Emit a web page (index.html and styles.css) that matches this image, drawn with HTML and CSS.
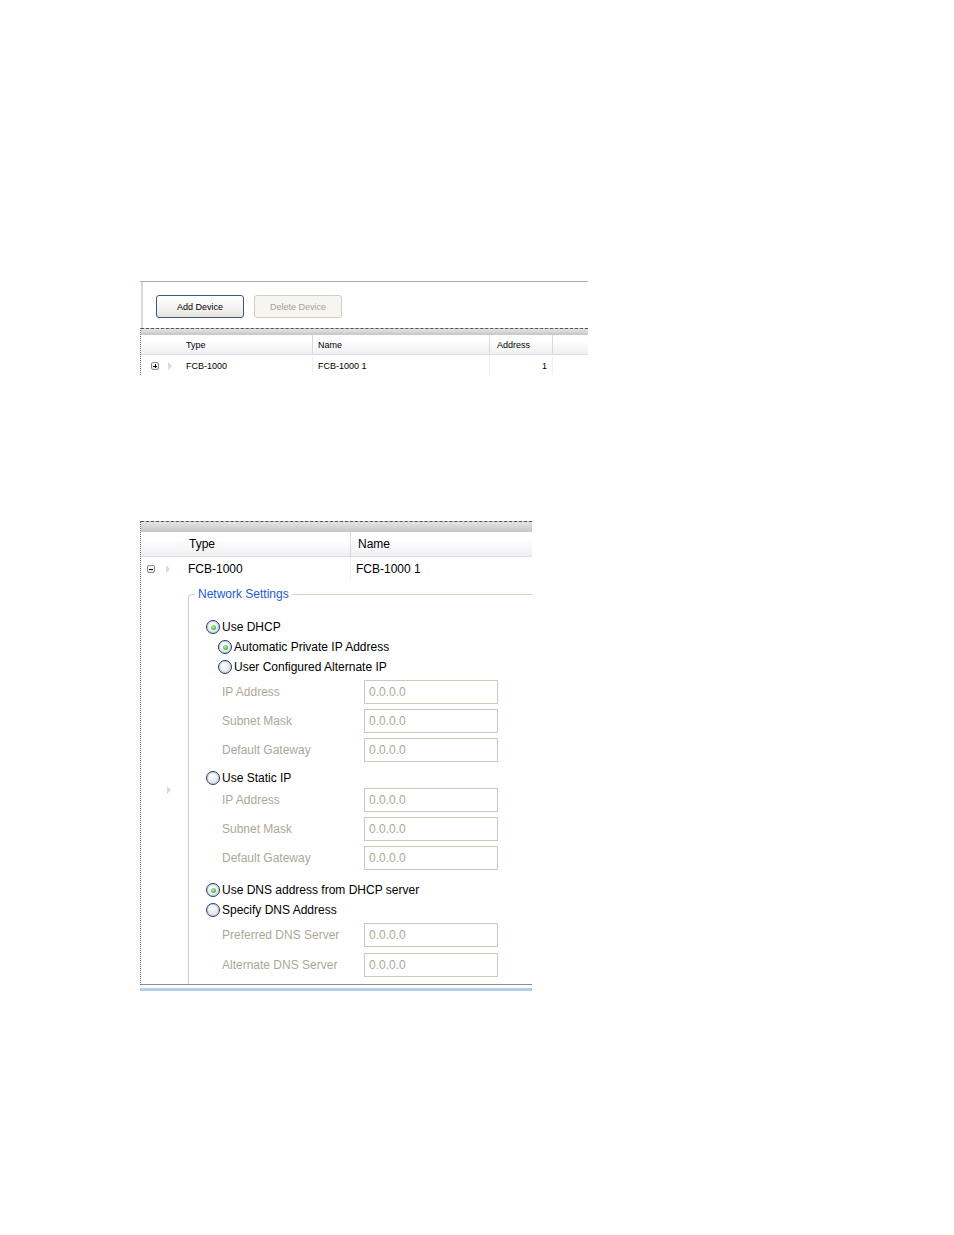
FILE: index.html
```html
<!DOCTYPE html>
<html>
<head lang="en">
    <meta charset="UTF-8">
    <title>Devices</title>
    <link rel="stylesheet" href="styles.css">
</head>
<body>
<div class="page">
    <div class="devices">
        <div class="toolbar">
            <button class="btn">Add Device</button>
            <button class="btn" disabled>Delete Device</button>
        </div>
        <div class="grid">
            <div class="band"></div>
            <div class="head">
                <div class="ind"></div>
                <div class="col c-type">Type</div>
                <div class="col c-name">Name</div>
                <div class="col c-addr">Address</div>
                <div class="col c-rest"></div>
            </div>
            <div class="row">
                <div class="ind"><span class="exp plus"></span><span class="tri"></span></div>
                <div class="col c-type">FCB-1000</div>
                <div class="col c-name">FCB-1000 1</div>
                <div class="col c-addr num">1</div>
                <div class="col c-rest"></div>
            </div>
        </div>
    </div>

    <div class="config">
        <div class="grid">
            <div class="band"></div>
            <div class="head">
                <div class="ind"></div>
                <div class="col c-type">Type</div>
                <div class="col c-name">Name</div>
            </div>
            <div class="row">
                <div class="ind"><span class="exp minus"></span><span class="tri"></span></div>
                <div class="col c-type">FCB-1000</div>
                <div class="col c-name">FCB-1000 1</div>
            </div>
            <div class="detail">
                <div class="ind"><span class="tri"></span></div>
                <fieldset class="group">
                    <legend>Network Settings</legend>

                    <div class="opt first"><span class="radio on"></span>Use DHCP</div>
                    <div class="opt sub"><span class="radio on"></span>Automatic Private IP Address</div>
                    <div class="opt sub"><span class="radio"></span>User Configured Alternate IP</div>
                    <div class="field f-first"><span class="lbl">IP Address</span><span class="box">0.0.0.0</span></div>
                    <div class="field"><span class="lbl">Subnet Mask</span><span class="box">0.0.0.0</span></div>
                    <div class="field"><span class="lbl">Default Gateway</span><span class="box">0.0.0.0</span></div>

                    <div class="opt o-static"><span class="radio"></span>Use Static IP</div>
                    <div class="field f-static"><span class="lbl">IP Address</span><span class="box">0.0.0.0</span></div>
                    <div class="field"><span class="lbl">Subnet Mask</span><span class="box">0.0.0.0</span></div>
                    <div class="field"><span class="lbl">Default Gateway</span><span class="box">0.0.0.0</span></div>

                    <div class="opt o-dns"><span class="radio on"></span>Use DNS address from DHCP server</div>
                    <div class="opt"><span class="radio"></span>Specify DNS Address</div>
                    <div class="field f-dns"><span class="lbl">Preferred DNS Server</span><span class="box">0.0.0.0</span></div>
                    <div class="field f-last"><span class="lbl">Alternate DNS Server</span><span class="box">0.0.0.0</span></div>
                </fieldset>
            </div>
        </div>
        <div class="foot"></div>
    </div>
</div>
</body>
</html>
```

FILE: styles.css
```css
* {
    margin: 0;
    padding: 0;
    box-sizing: border-box;
}
body {
    background: #fff;
    color: #000;
    font-family: "Liberation Sans", Arial, sans-serif;
}
.page {
    padding: 281px 0 0 140px;
}

/* top panel: device list */
.devices {
    width: 448px;
    height: 94px;
    overflow: hidden;
    border-top: 1px solid #9cb3ca;
    font-size: 9px;
}
.toolbar {
    display: flex;
    gap: 10px;
    height: 46px;
    margin-left: 1px;
    padding: 13px 0 0 13px;
    border-left: 2px solid #d4d7db;
}
.btn {
    width: 88px;
    height: 23px;
    border: 1px solid #3d5a78;
    border-radius: 3px;
    background: linear-gradient(#ffffff, #f1f0ec 70%, #e4e2da);
    font-family: inherit;
    font-size: 9px;
    color: #000;
}
.btn:disabled {
    border-color: #d3cebb;
    background: #f6f5ef;
    color: #a5a294;
}

.grid {
    border-left: 1px dotted #666;
}
.band {
    height: 7px;
    border-top: 1px dashed #555;
    background: linear-gradient(#e4e4e4, #c6c6c6);
}
.head, .row {
    display: flex;
}
.head {
    height: 20px;
    border-bottom: 1px solid #dedee2;
    background: linear-gradient(#ffffff 30%, #f0f0f4);
}
.row {
    height: 20px;
    padding-top: 2px;
}
.ind {
    flex: none;
    width: 40px;
    display: flex;
    align-items: center;
    padding-left: 10px;
    gap: 9px;
}
.col {
    display: flex;
    align-items: center;
    padding-left: 5px;
    border-right: 1px solid #d9d9d9;
    white-space: nowrap;
}
.row .col {
    border-right-color: #f0f0f0;
}
.c-type { width: 132px; }
.c-name { width: 177px; }
.c-addr { width: 63px; padding-left: 7px; }
.num {
    justify-content: flex-end;
    padding-right: 5px;
}
.c-rest {
    flex: 1;
    border-right: 0;
}
.row .c-rest {
    border-right: 0;
}

.exp {
    flex: none;
    position: relative;
    width: 8px;
    height: 8px;
    border: 1px solid #8a8a8a;
    border-radius: 2px;
    background: linear-gradient(#ffffff, #e2e2e2);
}
.exp::before, .plus::after {
    content: "";
    position: absolute;
    background: #000;
}
.exp::before {
    left: 1px;
    top: 2.5px;
    width: 4px;
    height: 1px;
}
.plus::after {
    left: 2.5px;
    top: 1px;
    width: 1px;
    height: 4px;
}
.tri {
    flex: none;
    width: 0;
    height: 0;
    border-left: 4px solid #dadada;
    border-top: 4px solid transparent;
    border-bottom: 4px solid transparent;
}

/* bottom panel: expanded row */
.config {
    margin-top: 146px;
    width: 392px;
    font-size: 12px;
}
.config .band {
    height: 11px;
}
.config .head {
    height: 25px;
}
.config .row {
    height: 24px;
    padding-top: 0;
}
.config .ind {
    padding-left: 6px;
    gap: 11px;
}
.config .col {
    padding-left: 7px;
}
.config .head .c-type {
    padding-left: 8px;
}
.config .row .c-name {
    padding-left: 5px;
}
.config .c-type { width: 170px; }
.config .c-name {
    flex: 1;
    border-right: 0;
}
.detail {
    display: flex;
    height: 404px;
    border-bottom: 1px solid #8e8e8e;
}
.detail .ind {
    width: 47px;
    padding-left: 26px;
    padding-top: 14px;
}
.group {
    flex: 1;
    margin-top: 6px;
    border: 1px solid #d5d2c4;
    border-right: 0;
    border-bottom: 0;
    border-top-left-radius: 4px;
}
.group legend {
    margin-left: 6px;
    padding: 0 3px;
    color: #1c5bd6;
    line-height: 14px;
}
.opt {
    display: flex;
    align-items: center;
    gap: 2px;
    height: 20px;
    padding-left: 17px;
}
.opt.first { margin-top: 16px; }
.opt.sub { padding-left: 29px; }
.o-static { margin-top: 6px; }
.o-dns { margin-top: 10px; }
.radio {
    flex: none;
    position: relative;
    width: 14px;
    height: 14px;
    border: 1px solid #1f3e6b;
    border-radius: 50%;
    background: radial-gradient(circle at 40% 35%, #ffffff, #dadada);
    box-shadow: inset 0 0 0 1px #c9d3df;
}
.radio.on::after {
    content: "";
    position: absolute;
    left: 3.5px;
    top: 3.5px;
    width: 5px;
    height: 5px;
    border-radius: 50%;
    background: radial-gradient(circle at 40% 35%, #a8f59a, #22a12c);
}
.field {
    display: flex;
    align-items: center;
    margin-top: 5px;
    padding-left: 33px;
    color: #aca899;
}
.f-first { margin-top: 3px; }
.f-static { margin-top: 0; }
.f-dns { margin-top: 3px; }
.f-last { margin-top: 6px; }
.lbl {
    width: 142px;
}
.box {
    display: flex;
    align-items: center;
    width: 134px;
    height: 24px;
    padding-left: 4px;
    border: 1px solid #cdc9bb;
}
.foot {
    height: 3px;
    margin-top: 3px;
    background: #b2cfe9;
}
```
